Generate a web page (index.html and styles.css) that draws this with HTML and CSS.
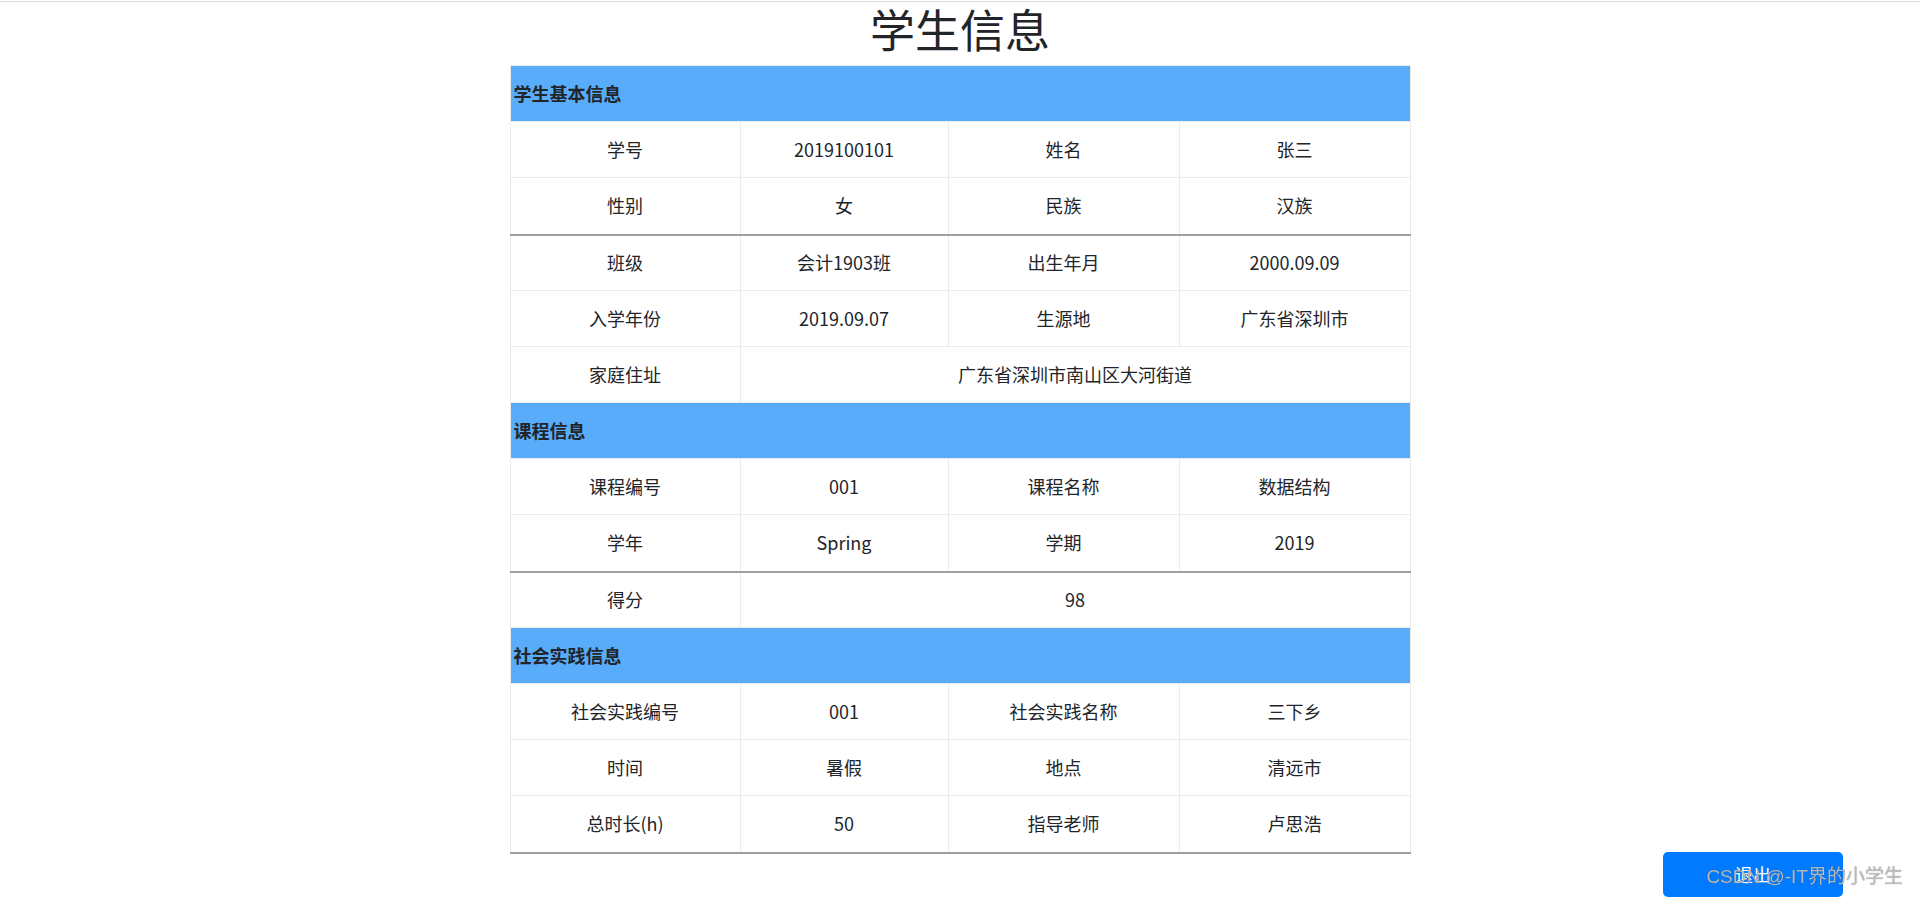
FILE: index.html
```html
<!DOCTYPE html>
<html lang="zh-CN">
<head>
<meta charset="utf-8">
<title>学生信息</title>
<link rel="stylesheet" href="styles.css">
</head>
<body>
<div class="topline"></div>
<h1 class="title">学生信息</h1>
<table class="info">
  <colgroup>
    <col class="c1"><col class="c2"><col class="c3"><col class="c4">
  </colgroup>
  <tbody>
    <tr class="band"><td colspan="4">学生基本信息</td></tr>
    <tr><td>学号</td><td>2019100101</td><td>姓名</td><td>张三</td></tr>
    <tr class="sep"><td>性别</td><td>女</td><td>民族</td><td>汉族</td></tr>
    <tr><td>班级</td><td>会计1903班</td><td>出生年月</td><td>2000.09.09</td></tr>
    <tr><td>入学年份</td><td>2019.09.07</td><td>生源地</td><td>广东省深圳市</td></tr>
    <tr><td>家庭住址</td><td colspan="3">广东省深圳市南山区大河街道</td></tr>
    <tr class="band"><td colspan="4">课程信息</td></tr>
    <tr><td>课程编号</td><td>001</td><td>课程名称</td><td>数据结构</td></tr>
    <tr class="sep"><td>学年</td><td>Spring</td><td>学期</td><td>2019</td></tr>
    <tr><td>得分</td><td colspan="3">98</td></tr>
    <tr class="band"><td colspan="4">社会实践信息</td></tr>
    <tr><td>社会实践编号</td><td>001</td><td>社会实践名称</td><td>三下乡</td></tr>
    <tr><td>时间</td><td>暑假</td><td>地点</td><td>清远市</td></tr>
    <tr class="sep"><td>总时长(h)</td><td>50</td><td>指导老师</td><td>卢思浩</td></tr>
  </tbody>
</table>
<div class="actions">
  <button class="btn-exit" type="button">退出</button>
</div>
<div class="watermark">CSDN @-IT界的小学生</div>
</body>
</html>
```
FILE: styles.css
```css
html, body {
  margin: 0;
  padding: 0;
  background: #fff;
}
body {
  font-family: "Noto Sans CJK SC", "Noto Sans", sans-serif;
  font-size: 18px;
  color: #212529;
  padding-top: 1px;
}
.topline {
  border-top: 1px solid #dcdcdc;
}
.title {
  margin: 0 0 9px 0;
  font-size: 45px;
  font-weight: 400;
  line-height: 54px;
  text-align: center;
  color: #212529;
}
.info {
  width: 900px;
  margin: 0 auto;
  border-collapse: collapse;
  table-layout: fixed;
}
.c1 { width: 230px; }
.c2 { width: 208px; }
.c3 { width: 231px; }
.c4 { width: 231px; }
.info tr {
  height: 56px;
}
.info tr.sep {
  height: 57px;
}
.info td {
  border: 1px solid #ebebeb;
  padding: 0;
  text-align: center;
  vertical-align: middle;
  line-height: 1.5;
}
.info tr.band td {
  background: #58acf9;
  text-align: left;
  font-weight: 700;
  padding-left: 3px;
}
.info tr.sep td {
  border-bottom: 2px solid #a0a0a0;
}
.actions {
  display: flex;
  justify-content: flex-end;
  padding-right: 77px;
  margin-top: -2px;
}
.btn-exit {
  width: 180px;
  height: 45px;
  border: none;
  border-radius: 5px;
  background: #007bff;
  color: #fff;
  font-family: "Noto Sans CJK SC", "Noto Sans", sans-serif;
  font-size: 18px;
  padding: 0;
}
.watermark {
  position: fixed;
  top: 866px;
  right: 17px;
  font-family: "Liberation Sans", "Noto Sans CJK SC", sans-serif;
  font-size: 19px;
  line-height: 22px;
  color: rgba(190, 190, 190, 0.95);
  text-shadow: 0 0 1px rgba(60, 60, 60, 0.6);
  white-space: nowrap;
  pointer-events: none;
}
```
